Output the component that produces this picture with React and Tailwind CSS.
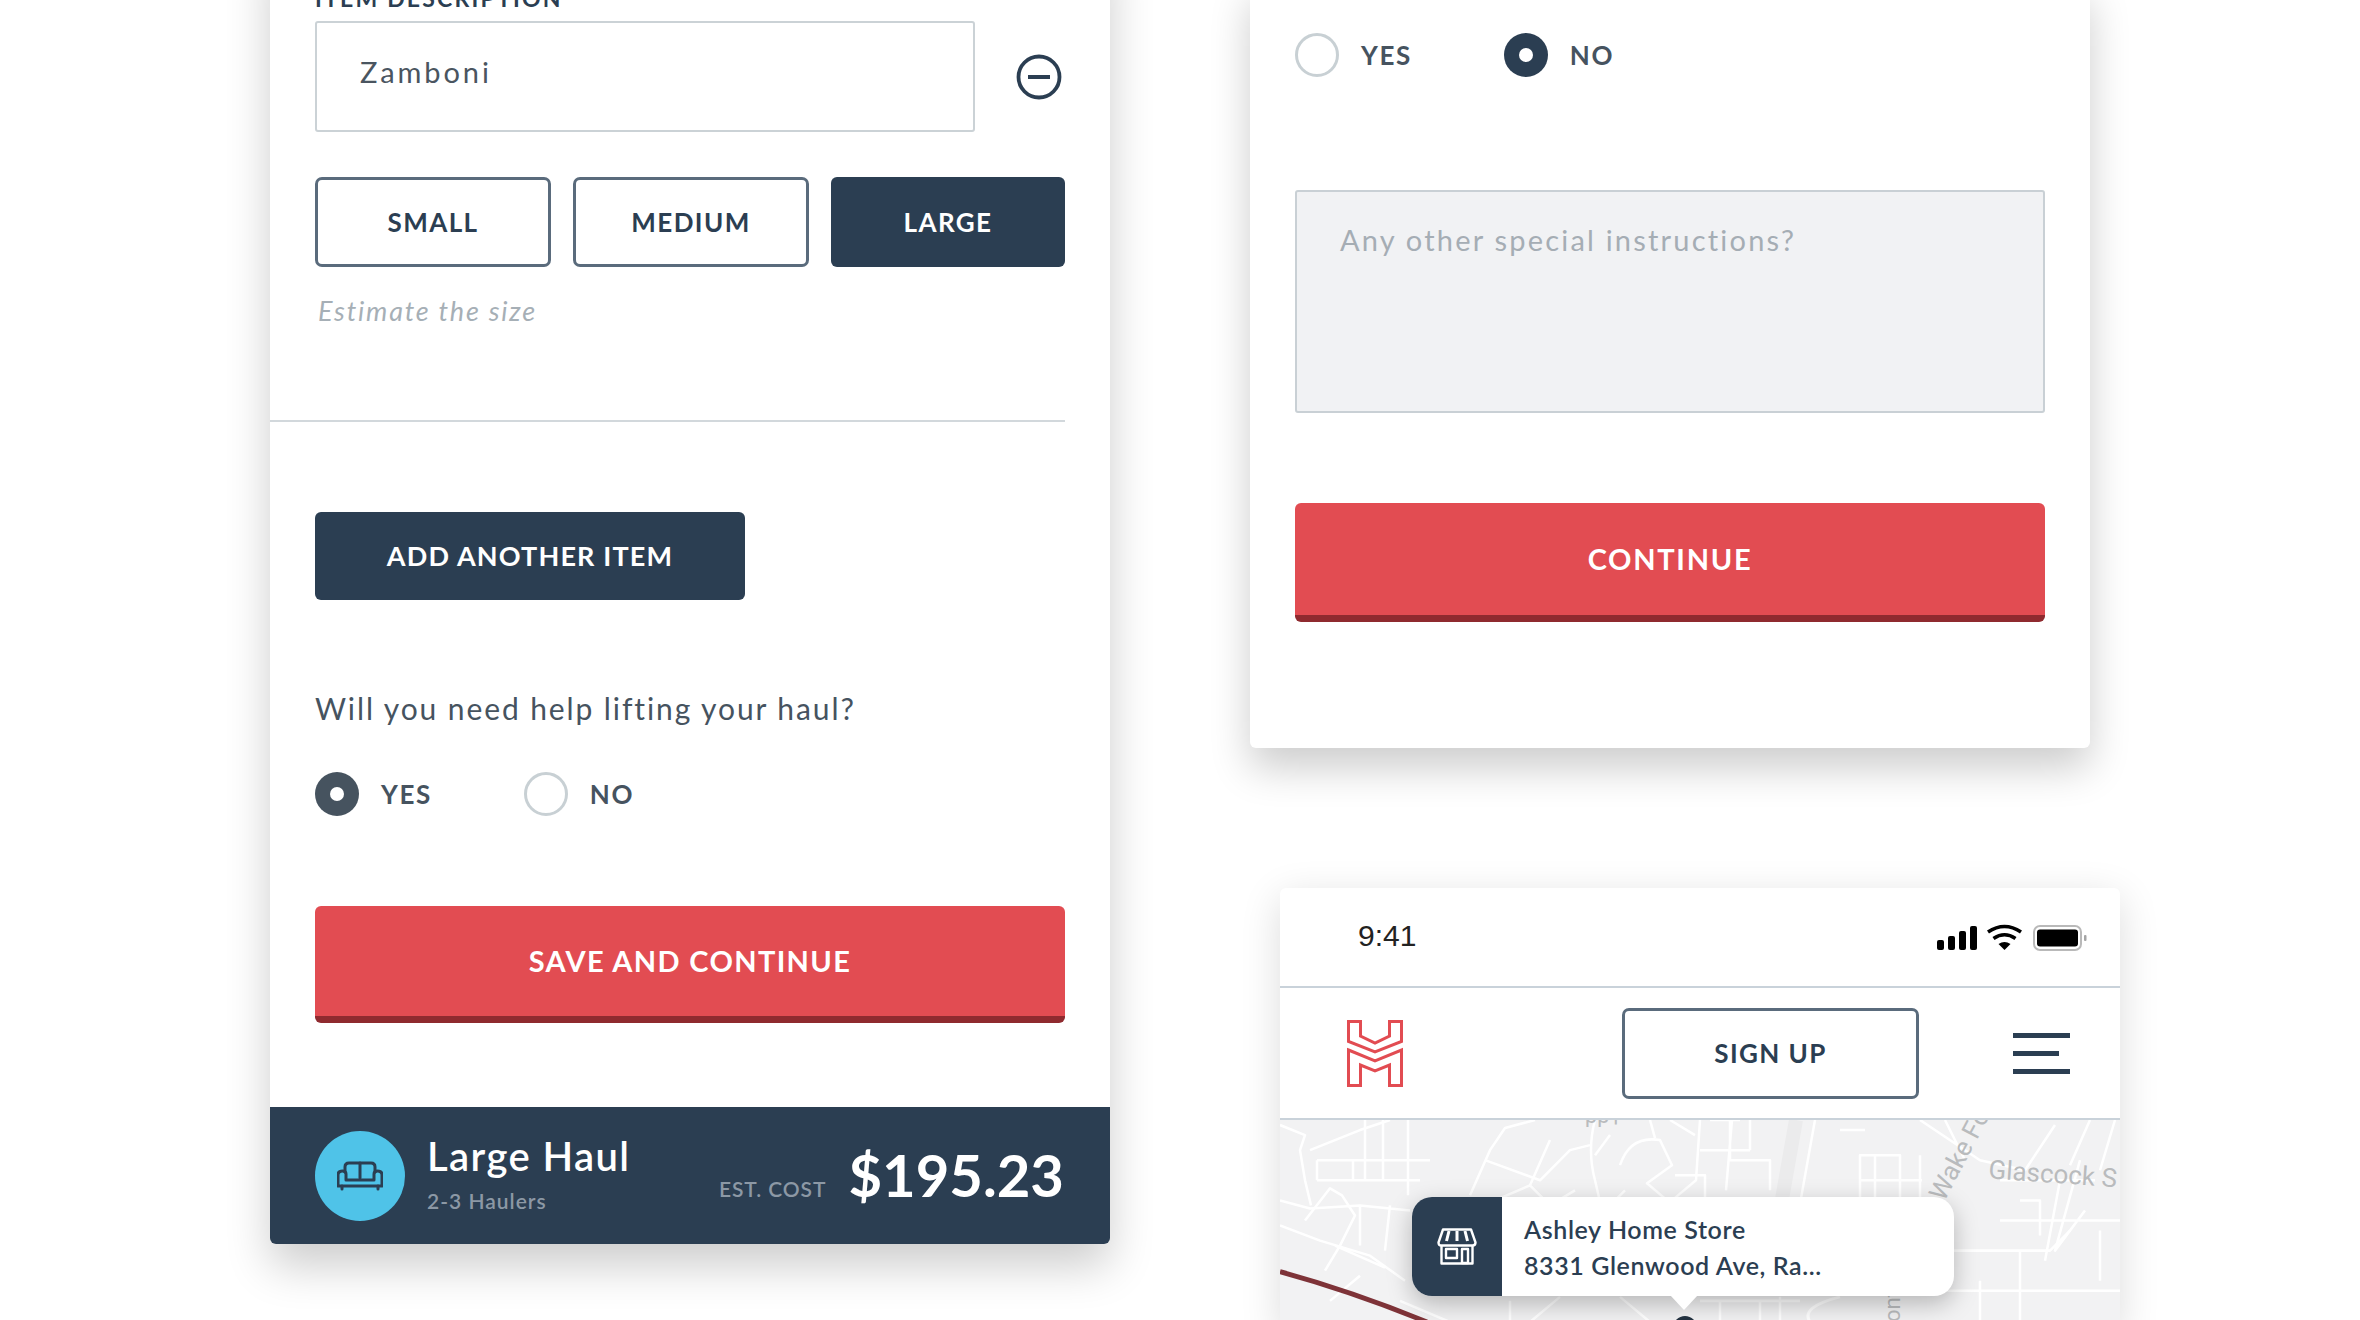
import React from 'react';

// Radio row, used in both forms
function Radio({ label, checked, ring }) {
  return (
    <div className="flex items-center gap-[22px]">
      {checked ? (
        <span className={`flex h-[44px] w-[44px] items-center justify-center rounded-full ${ring}`}>
          <span className="h-[14px] w-[14px] rounded-full bg-white" />
        </span>
      ) : (
        <span className="h-[44px] w-[44px] rounded-full border-[3px] border-[#c8d0d4] bg-white" />
      )}
      <span className="text-[26px] font-bold tracking-[1.600px] text-[#46535f]">{label}</span>
    </div>
  );
}

function SizeButton({ label, active }) {
  if (active) {
    return (
      <div className="flex h-[90px] items-center justify-center rounded-[6px] bg-[#2b3e52] text-[26px] font-bold tracking-[1.400px] text-white">
        {label}
      </div>
    );
  }
  return (
    <div className="flex h-[90px] items-center justify-center rounded-[7px] border-[3px] border-[#5a6b7c] bg-white text-[26px] font-bold tracking-[1.400px] text-[#2b3e52]">
      {label}
    </div>
  );
}

function RedButton({ label, height, tracking }) {
  return (
    <div className={`flex ${height} ${tracking} w-[750px] items-center justify-center rounded-[6px] border-b-[7px] border-[#8f2a2f] bg-[#e24c52] text-[29px] font-bold text-white`}>
      {label}
    </div>
  );
}

function SofaIcon() {
  return (
    <svg width="46" height="30" viewBox="0 0 46 30" fill="none" stroke="#2b3e52" strokeWidth="3" strokeLinejoin="round" strokeLinecap="round">
      <path d="M8 11V6q0-4 4-4h22q4 0 4 4v5" />
      <path d="M23 2v15" />
      <path d="M9 19h28v-6q0-3 3.500-3q4.500 0 4.500 4v11H1V14q0-4 4.500-4Q9 10 9 13z" />
      <path d="M5 25v3M41 25v3" />
    </svg>
  );
}

function StoreIcon() {
  return (
    <svg width="40" height="37" viewBox="0 0 40 37" fill="none" stroke="#ffffff" strokeWidth="2.400" strokeLinejoin="round">
      <path d="M6 1.500h28l4.500 13q0 3-3 3h-31q-3 0-3-3z" />
      <path d="M12 3l-2.500 10M20 3v10M28 3l2.500 10" strokeWidth="3" />
      <path d="M4.500 17.500v18h31v-18" />
      <path d="M9 21h11v9H9zM25 21h6v14h-6z" />
    </svg>
  );
}

function HaulLogo() {
  return (
    <svg width="56" height="67" viewBox="0 0 56 67" fill="none" stroke="#e24c52" strokeWidth="3" strokeLinejoin="miter">
      <path d="M1.500 1.500h12v14.500L28 23l14.500-7V1.500h12V21.500L28 32 1.500 21.500z" />
      <path d="M1.500 30L28 41l26.500-11v35.500h-12V45L28 51 13.500 45v20.500h-12z" />
    </svg>
  );
}

function StatusIcons() {
  return (
    <svg width="155" height="30" viewBox="0 0 155 30">
      <rect x="0" y="17" width="7" height="10" rx="2" fill="#000" />
      <rect x="11" y="13" width="7" height="14" rx="2" fill="#000" />
      <rect x="22" y="8" width="7" height="19" rx="2" fill="#000" />
      <rect x="33" y="3" width="7" height="24" rx="2" fill="#000" />
      <path d="M51 9q16.500-11 33 0" fill="none" stroke="#000" strokeWidth="3.600" />
      <path d="M56.500 15.500q11-7.500 22 0" fill="none" stroke="#000" strokeWidth="3.600" />
      <path d="M61.500 21q6-4 12 0L67.500 27z" fill="#000" />
      <rect x="97" y="3" width="47" height="24" rx="6" fill="none" stroke="#b9b9b9" strokeWidth="2" />
      <rect x="100" y="6.500" width="41" height="17" rx="3" fill="#000" />
      <rect x="147" y="12" width="2.500" height="6" rx="1" fill="#a5a5a5" />
    </svg>
  );
}

function MapBackdrop() {
  return (
    <svg className="h-full w-full" viewBox="0 0 840 207" preserveAspectRatio="none" fill="none">
      <rect width="840" height="207" fill="#f2f2f3" />
      <path d="M516 0l-16 90" stroke="#ebebec" strokeWidth="14" />
      <g stroke="#ffffff" strokeWidth="2.500" strokeLinejoin="round">
        <path d="M85 0v60M103 0v60M128 0v75M37 40h113M37 60h103M37 40v20M73 40v20" />
        <path d="M0 5l25 10-5 15 5 30 6 25M25 100l25-32 12 7 13 20-15 30-15 25" />
        <path d="M0 80l30 8 50-3 50 5M0 105l40 15 50 15 35 25M80 85v40M110 85l-5 45M55 125l50 22" />
        <path d="M30 30l50-20 30-10M0 150l20 6M50 180l30-25" />
        <path d="M190 75l20-45 15-22 30-8M205 40l55 20 30-30 20-5M250 65l20-45M215 80l35-15 20 20 25-15" />
        <path d="M315 0q-8 30 0 60l14 60M340 45q10-30 40-25l12 25-25 18 26 22M370 0l5 18" />
        <path d="M420 0l-4 60-24 20M450 0v40h40v30M420 30h50M452 0l-6 70M430 0h30M470 0v30" />
        <path d="M330 15l-15 20M345 70l-20 20M390 0l25 15M395 55h30v25" />
        <path d="M580 35h40v55h-40zM595 35v55M580 60h62M640 35v55M535 0l-14 78M560 10h25" />
        <path d="M640 0l60 40 45 10 30-45M665 0l20 40M720 60h95M740 80h20v35M720 100h120M780 60l-15 80M800 40l-25 90 30-40" />
        <path d="M660 130h110l20-20M700 160v41M740 130v71M640 170h200M820 110v50M810 0l-20 45M835 0l-15 50" />
        <path d="M120 180l50 21M230 180v21M280 176l-30 25M340 176l30 25M420 180h100M500 176v25M440 180v25h40v-25" />
      </g>
      <path d="M560 176q-40 10-30 25" stroke="#ffffff" strokeWidth="3" />
      <path d="M0 151Q70 170 147 201" stroke="#7e3338" strokeWidth="5" />
      <g fill="#b9bbbd" fontFamily="Roboto, sans-serif" stroke="none">
        <text x="708" y="58" fontSize="26" transform="rotate(4 708 58)">Glascock S</text>
        <text x="664" y="82" fontSize="26" transform="rotate(-62 664 82)">Wake Fo</text>
        <text x="620" y="201" fontSize="22" transform="rotate(-90 620 201)">ont</text>
        <text x="342" y="-9" fontSize="22" transform="rotate(180 342 -9)">+dd</text>
      </g>
    </svg>
  );
}

export default function App() {
  return (
    <div className="flex h-[1320px] items-start overflow-hidden bg-white font-[Lato,sans-serif]">
      {/* left form */}
      <div className="ml-[270px] mt-[-60px] w-[840px] shrink-0 rounded-b-[6px] bg-white pl-[45px] pt-[45px] shadow-[0_22px_45px_rgba(0,0,0,0.2)]">
        <div className="mb-[10px] h-[26px] text-[23px] font-bold leading-[26px] tracking-[2.200px] text-[#2b3e52]">ITEM DESCRIPTION</div>
        <div className="flex items-center">
          <div className="flex h-[111px] w-[660px] items-start rounded-[3px] border-2 border-[#cbd2d6] pl-[43px] pt-[31px] text-[29px] leading-[36px] tracking-[2.900px] text-[#4a5560]">
            Zamboni
          </div>
          <svg className="ml-[41px]" width="46" height="46" viewBox="0 0 46 46">
            <circle cx="23" cy="23" r="20.500" fill="none" stroke="#2b3e52" strokeWidth="3.800" />
            <rect x="12" y="21" width="22" height="4" fill="#2b3e52" />
          </svg>
        </div>
        <div className="mt-[45px] grid w-[750px] grid-cols-[236px_236px_234px] gap-[22px]">
          <SizeButton label="SMALL" />
          <SizeButton label="MEDIUM" />
          <SizeButton label="LARGE" active />
        </div>
        <div className="ml-[3px] mt-[29px] h-[30px] text-[27px] italic leading-[30px] tracking-[1.800px] text-[#a6afb6]">Estimate the size</div>
        <div className="-ml-[45px] mt-[94px] h-[2px] w-[795px] bg-[#d2d8dc]" />
        <div className="mt-[90px] flex h-[88px] w-[430px] items-center justify-center rounded-[6px] bg-[#2b3e52] text-[27px] font-bold tracking-[1.150px] text-white">
          ADD ANOTHER ITEM
        </div>
        <div className="mt-[88px] h-[40px] text-[30px] leading-[40px] tracking-[1.900px] text-[#46535f]">Will you need help lifting your haul?</div>
        <div className="mt-[44px] flex gap-[92px]">
          <Radio label="YES" checked ring="bg-[#46535f]" />
          <Radio label="NO" />
        </div>
        <div className="mb-[84px] mt-[90px]">
          <RedButton label="SAVE AND CONTINUE" height="h-[117px]" tracking="tracking-[1.350px]" />
        </div>
        {/* estimate footer */}
        <div className="-ml-[45px] flex h-[137px] items-center rounded-b-[6px] bg-[#2b3e52] pl-[45px] pr-[46px]">
          <div className="flex h-[90px] w-[90px] items-center justify-center rounded-full bg-[#4fc3e8]">
            <SofaIcon />
          </div>
          <div className="ml-[22px]">
            <div className="mt-[-5px] text-[40px] font-semibold leading-[48px] tracking-[1.400px] text-white">Large Haul</div>
            <div className="mt-[8px] text-[21px] font-semibold leading-[26px] tracking-[1px] text-[#8c98a5]">2-3 Haulers</div>
          </div>
          <div className="ml-auto flex items-baseline gap-[22px]">
            <span className="text-[21px] font-semibold tracking-[0.900px] text-[#8c98a5]">EST. COST</span>
            <span className="mt-[-2px] text-[58px] font-bold leading-[70px] text-white">$195.23</span>
          </div>
        </div>
      </div>

      <div className="ml-[140px] w-[870px] shrink-0">
        {/* right form */}
        <div className="mt-[-20px] w-[840px] rounded-b-[6px] bg-white px-[45px] pb-[126px] pt-[53px] shadow-[0_20px_40px_rgba(0,0,0,0.2)]">
          <div className="flex gap-[92px]">
            <Radio label="YES" />
            <Radio label="NO" checked ring="bg-[#2b3e52]" />
          </div>
          <div className="mt-[113px] h-[223px] rounded-[3px] border-2 border-[#c9d0d5] bg-[#f1f2f4] pl-[43px] pt-[30px] text-[29px] leading-[36px] tracking-[2.200px] text-[#a5adb4]">
            Any other special instructions?
          </div>
          <div className="mt-[90px]">
            <RedButton label="CONTINUE" height="h-[119px]" tracking="tracking-[1.700px]" />
          </div>
        </div>

        {/* phone */}
        <div className="ml-[30px] mt-[140px] flex h-[440px] w-[840px] flex-col overflow-hidden rounded-t-[6px] bg-white shadow-[0_10px_40px_rgba(0,0,0,0.14)]">
          <div className="flex h-[100px] shrink-0 items-center border-b-2 border-[#c9d2da] pl-[78px] pr-[28px]">
            <span className="mb-[4px] font-['Liberation_Sans',sans-serif] text-[30px] text-[#222222]">9:41</span>
            <span className="ml-auto mt-[2px]"><StatusIcons /></span>
          </div>
          <div className="flex h-[132px] shrink-0 items-center border-b-2 border-[#c9d2da] pl-[67px]">
            <HaulLogo />
            <div className="ml-[219px] flex h-[91px] w-[297px] items-center justify-center rounded-[7px] border-[3px] border-[#5a6b7c] text-[26px] font-bold tracking-[1.400px] text-[#2b3e52]">
              SIGN UP
            </div>
            <div className="ml-[94px] flex flex-col gap-[13px]">
              <span className="h-[5px] w-[57px] bg-[#2b3e52]" />
              <span className="h-[5px] w-[46px] bg-[#2b3e52]" />
              <span className="h-[5px] w-[57px] bg-[#2b3e52]" />
            </div>
          </div>
          <div className="relative min-h-0 flex-1">
            <MapBackdrop />
            {/* store tooltip */}
            <div className="absolute left-[132px] top-[77px] flex h-[99px] w-[542px] rounded-[20px] bg-white shadow-[0_8px_24px_rgba(0,0,0,0.25)]">
              <div className="flex w-[90px] items-center justify-center rounded-l-[20px] bg-[#2b3e52]">
                <StoreIcon />
              </div>
              <div className="ml-[22px] flex flex-col justify-center text-[25px] font-semibold leading-[36px] tracking-[0.600px] text-[#2b3e52]">
                <span>Ashley Home Store</span>
                <span>8331 Glenwood Ave, Ra...</span>
              </div>
            </div>
            <div className="absolute left-[390px] top-[175px] h-0 w-0 border-x-[14px] border-t-[15px] border-x-transparent border-t-white" />
            <div className="absolute left-[393px] top-[196px] h-[24px] w-[24px] rounded-full bg-[#22313f]" />
          </div>
        </div>
      </div>
    </div>
  );
}
